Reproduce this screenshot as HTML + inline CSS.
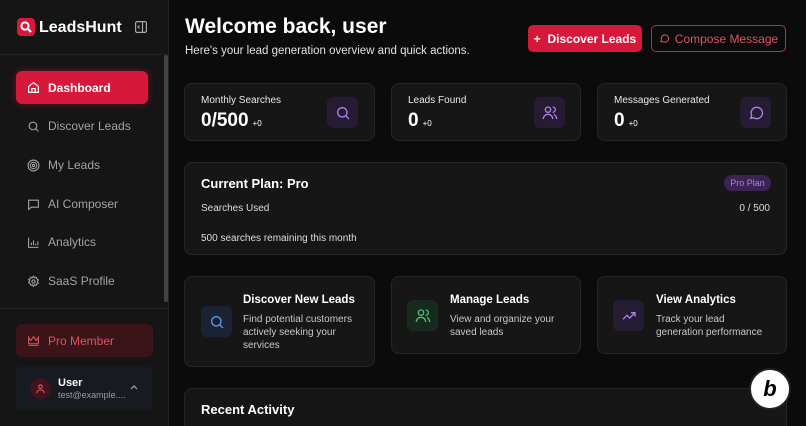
<!DOCTYPE html>
<html><head><meta charset="utf-8"><style>
*{box-sizing:border-box;margin:0;padding:0}
html,body{width:806px;height:426px;overflow:hidden}
body{background:#0b0b0c;font-family:"Liberation Sans",sans-serif;color:#fff;position:relative}
.abs{position:absolute}
.side{left:0;top:0;width:169px;height:426px;background:#151516;border-right:1px solid #232325}
.nav{position:absolute;left:27px;font-size:12px;color:#a3a3a8;display:flex;align-items:center;gap:8px}
.nav svg{width:13px;height:13px}
.card{position:absolute;background:#161617;border:1px solid #262628;border-radius:8px}
.lbl{font-size:10px;color:#e8e8e8}
.big{font-size:19px;font-weight:bold}
.sm{font-size:8px;font-weight:normal;margin-left:4px}
.ib{position:absolute;width:31px;height:31px;border-radius:6px;display:flex;align-items:center;justify-content:center}
.ib svg{width:16px;height:16px}
.at{font-size:11.5px;font-weight:bold;position:absolute;left:58px;top:17px}
.ad{font-size:10px;color:#c8c8cc;position:absolute;left:58px;top:36px;line-height:13px;width:115px}
</style></head><body>
<div class="abs side">
  <div class="abs" style="left:17px;top:18px;width:18px;height:18px;background:#d6183a;border-radius:4px"></div>
  <svg class="abs" style="left:19px;top:20px" width="14" height="14" viewBox="0 0 14 14"><circle cx="6" cy="6" r="3.6" fill="none" stroke="#fff" stroke-width="2"/><path d="M8.5 8.5L12 12" stroke="#fff" stroke-width="2.2"/></svg>
  <div class="abs" style="left:39px;top:19px;font-size:16px;font-weight:bold">LeadsHunt</div>
  <svg class="abs" style="left:135px;top:21px" width="12" height="12" viewBox="0 0 12 12" fill="none" stroke="#aaa" stroke-width="1.2"><rect x="0.6" y="0.6" width="10.8" height="10.8" rx="1.5"/><path d="M7.5 1v10M4.5 4.5L3 6l1.5 1.5"/></svg>
  <div class="abs" style="left:0;top:54px;width:168px;height:1px;background:#232325"></div>
  <div class="abs" style="left:16px;top:71px;width:132px;height:33px;background:#d6183a;border-radius:6px;box-shadow:0 0 8px rgba(214,24,58,.4)"></div>
  <svg class="abs" style="left:27px;top:81px" width="13" height="13" viewBox="0 0 24 24" fill="none" stroke="#fff" stroke-width="2.2"><path d="M3 10l9-7 9 7v11H3z"/><path d="M9 21v-7h6v7"/></svg>
  <div class="abs" style="left:48px;top:81px;font-size:12px;font-weight:bold">Dashboard</div>
  <div class="nav" style="top:119px"><svg viewBox="0 0 24 24" fill="none" stroke="#a3a3a8" stroke-width="2"><circle cx="11" cy="11" r="7"/><path d="M21 21l-5-5"/></svg>Discover Leads</div>
  <div class="nav" style="top:158px"><svg viewBox="0 0 24 24" fill="none" stroke="#a3a3a8" stroke-width="2"><circle cx="12" cy="12" r="10"/><circle cx="12" cy="12" r="6"/><circle cx="12" cy="12" r="2"/></svg>My Leads</div>
  <div class="nav" style="top:197px"><svg viewBox="0 0 24 24" fill="none" stroke="#a3a3a8" stroke-width="2"><path d="M3 4h18v13H8l-5 4z"/></svg>AI Composer</div>
  <div class="nav" style="top:235px"><svg viewBox="0 0 24 24" fill="none" stroke="#a3a3a8" stroke-width="2"><path d="M3 3v18h18M8 17v-5M12 17V8M16 17v-3M20 17V10"/></svg>Analytics</div>
  <div class="nav" style="top:274px"><svg viewBox="0 0 24 24" fill="none" stroke="#a3a3a8" stroke-width="2"><circle cx="12" cy="12" r="3"/><path d="M12 2l2 3 3-1 1 3 3 2-2 3 2 3-3 1-1 3-3-1-2 3-2-3-3 1-1-3-3-2 2-3-2-3 3-1 1-3 3 1z"/></svg>SaaS Profile</div>
  <div class="abs" style="left:164px;top:55px;width:4px;height:247px;background:#444;border-radius:2px"></div>
  <div class="abs" style="left:0;top:308px;width:168px;height:1px;background:#232325"></div>
  <div class="abs" style="left:16px;top:324px;width:137px;height:33px;background:#3a1419;border-radius:6px"></div>
  <svg class="abs" style="left:27px;top:334px" width="13" height="13" viewBox="0 0 24 24" fill="none" stroke="#e0525f" stroke-width="2"><path d="M3 6l4 6 5-7 5 7 4-6v12H3zM3 21h18"/></svg>
  <div class="abs" style="left:48px;top:334px;font-size:12px;color:#e0525f">Pro Member</div>
  <div class="abs" style="left:16px;top:366px;width:136px;height:44px;background:#171a20;border-radius:6px"></div>
  <div class="abs" style="left:30px;top:378px;width:21px;height:21px;border-radius:50%;background:#3f151c"></div>
  <svg class="abs" style="left:35px;top:383px" width="11" height="11" viewBox="0 0 24 24" fill="none" stroke="#e0525f" stroke-width="2.4"><circle cx="12" cy="8" r="4"/><path d="M4 22c0-5 4-7 8-7s8 2 8 7"/></svg>
  <div class="abs" style="left:58px;top:377px;font-size:11px;font-weight:bold">User</div>
  <div class="abs" style="left:58px;top:390px;font-size:9px;color:#9a9aa0">test@example....</div>
  <svg class="abs" style="left:130px;top:384px" width="8" height="6" viewBox="0 0 8 6" fill="none" stroke="#aaa" stroke-width="1.2"><path d="M1 5l3-3 3 3"/></svg>
</div>

<div class="abs" style="left:185px;top:15px;font-size:21px;font-weight:bold">Welcome back, user</div>
<div class="abs" style="left:185px;top:45px;font-size:11.5px;color:#e0e0e0">Here's your lead generation overview and quick actions.</div>
<div class="abs" style="left:528px;top:25px;width:114px;height:27px;background:#d6183a;border-radius:5px;font-size:12px;font-weight:bold;display:flex;align-items:center;justify-content:center">+&nbsp; Discover Leads</div>
<div class="abs" style="left:651px;top:25px;width:135px;height:27px;border:1.5px solid #c8283e;border-radius:5px;font-size:12px;color:#e0525f;display:flex;align-items:center;justify-content:center;gap:5px"><svg width="11" height="11" viewBox="0 0 24 24" fill="none" stroke="#e0525f" stroke-width="2.2"><path d="M4 19l1.5-4A8 8 0 1 1 9 19z"/></svg>Compose Message</div>

<div class="card" style="left:184px;top:83px;width:191px;height:58px">
  <div class="abs lbl" style="left:16px;top:11px">Monthly Searches</div>
  <div class="abs big" style="left:16px;top:26px">0/500<span class="sm">+0</span></div>
  <div class="ib" style="left:142px;top:13px;background:#251c33"><svg viewBox="0 0 24 24" fill="none" stroke="#b07fe8" stroke-width="2"><circle cx="11" cy="11" r="7"/><path d="M21 21l-5-5"/></svg></div>
</div>
<div class="card" style="left:391px;top:83px;width:190px;height:58px">
  <div class="abs lbl" style="left:16px;top:11px">Leads Found</div>
  <div class="abs big" style="left:16px;top:26px">0<span class="sm">+0</span></div>
  <div class="ib" style="left:142px;top:13px;background:#251c33"><svg viewBox="0 0 24 24" fill="none" stroke="#b07fe8" stroke-width="2"><circle cx="9" cy="7" r="4"/><path d="M2 21c0-4 3-7 7-7s7 3 7 7M16 3a4 4 0 0 1 0 8M22 21c0-3-2-6-4-7"/></svg></div>
</div>
<div class="card" style="left:597px;top:83px;width:190px;height:58px">
  <div class="abs lbl" style="left:16px;top:11px">Messages Generated</div>
  <div class="abs big" style="left:16px;top:26px">0<span class="sm">+0</span></div>
  <div class="ib" style="left:142px;top:13px;background:#251c33"><svg viewBox="0 0 24 24" fill="none" stroke="#b07fe8" stroke-width="2"><path d="M4 20l1.5-4.5A8.5 8.5 0 1 1 8.5 19z"/></svg></div>
</div>

<div class="card" style="left:184px;top:162px;width:603px;height:93px">
  <div class="abs" style="left:16px;top:13px;font-size:13px;font-weight:bold">Current Plan: Pro</div>
  <div class="abs" style="left:539px;top:12px;width:47px;height:16px;border-radius:8px;background:#3b2352;color:#b07fe8;font-size:9px;display:flex;align-items:center;justify-content:center">Pro Plan</div>
  <div class="abs" style="left:16px;top:40px;font-size:10px;color:#ddd">Searches Used</div>
  <div class="abs" style="right:16px;top:40px;font-size:10px;color:#ddd">0 / 500</div>
  <div class="abs" style="left:16px;top:70px;font-size:10px;color:#ddd">500 searches remaining this month</div>
</div>

<div class="card" style="left:184px;top:276px;width:191px;height:91px">
  <div class="ib" style="left:16px;top:29px;background:#1a2233"><svg viewBox="0 0 24 24" fill="none" stroke="#5b9be8" stroke-width="2"><circle cx="11" cy="11" r="7"/><path d="M21 21l-5-5"/></svg></div>
  <div class="at">Discover New Leads</div>
  <div class="ad">Find potential customers actively seeking your services</div>
</div>
<div class="card" style="left:391px;top:276px;width:190px;height:78px">
  <div class="ib" style="left:15px;top:23px;background:#182a1e"><svg viewBox="0 0 24 24" fill="none" stroke="#4cc07a" stroke-width="2"><circle cx="9" cy="7" r="4"/><path d="M2 21c0-4 3-7 7-7s7 3 7 7M16 3a4 4 0 0 1 0 8M22 21c0-3-2-6-4-7"/></svg></div>
  <div class="at">Manage Leads</div>
  <div class="ad">View and organize your saved leads</div>
</div>
<div class="card" style="left:597px;top:276px;width:190px;height:78px">
  <div class="ib" style="left:15px;top:23px;background:#251c33"><svg viewBox="0 0 24 24" fill="none" stroke="#b07fe8" stroke-width="2"><path d="M3 17l6-6 4 4 8-8M15 7h6v6"/></svg></div>
  <div class="at">View Analytics</div>
  <div class="ad" style="width:110px">Track your lead generation performance</div>
</div>

<div class="card" style="left:184px;top:388px;width:603px;height:50px">
  <div class="abs" style="left:16px;top:13px;font-size:13px;font-weight:bold">Recent Activity</div>
</div>

<div class="abs" style="left:749px;top:368px;width:42px;height:42px;border-radius:50%;background:#fff;border:2px solid #222;display:flex;align-items:center;justify-content:center;font-size:22px;font-weight:bold;font-style:italic;color:#000">b</div>
</body></html>
